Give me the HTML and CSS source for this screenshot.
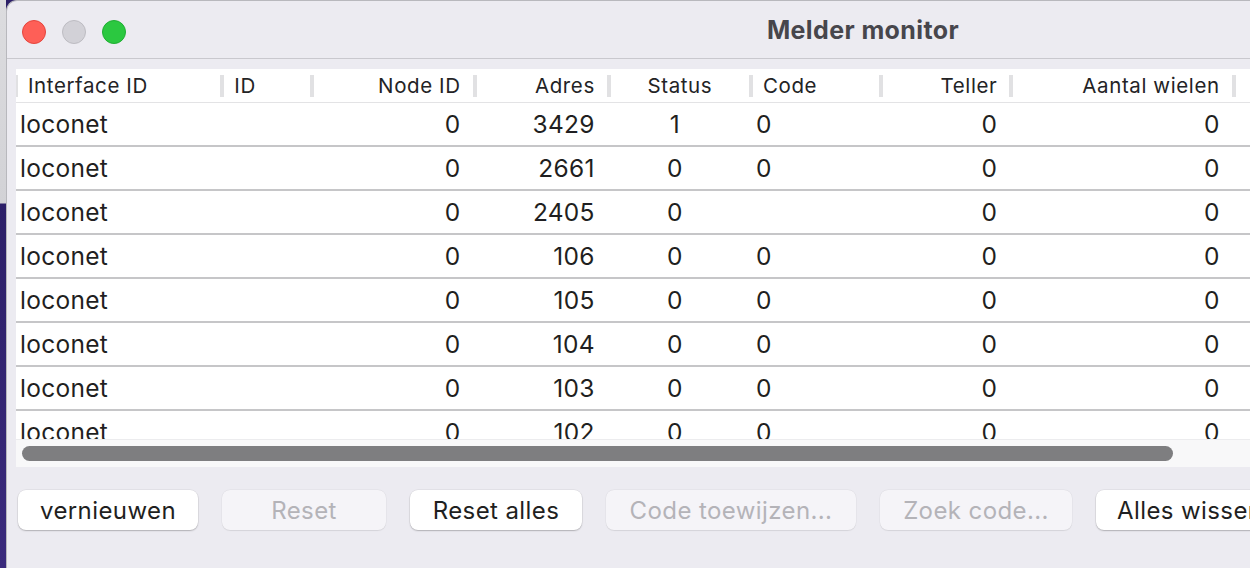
FILE: index.html
```html
<!DOCTYPE html>
<html>
<head>
    <title>Melder monitor</title>
    <link rel="stylesheet" href="styles.css">
</head>
<body>
    <div class="desktop-edge"></div>

    <div class="window">
        <!-- Titelbalk -->
        <div class="titlebar">
            <div class="lights">
                <span class="light close"></span>
                <span class="light minimize"></span>
                <span class="light zoom"></span>
            </div>
            <div class="title">Melder monitor</div>
            <div></div>
        </div>

        <div class="content">
            <!-- Tabel met melders -->
            <div class="table-box">
                <div class="table-clip">
                    <table class="melders">
                        <colgroup>
                            <col style="width: 206px">
                            <col style="width: 90px">
                            <col style="width: 162px">
                            <col style="width: 134px">
                            <col style="width: 142px">
                            <col style="width: 130px">
                            <col style="width: 130px">
                            <col style="width: 222px">
                            <col style="width: 200px">
                        </colgroup>
                        <thead>
                            <tr>
                                <th class="left">Interface ID</th>
                                <th class="left">ID</th>
                                <th class="right">Node ID</th>
                                <th class="right">Adres</th>
                                <th class="center">Status</th>
                                <th class="left">Code</th>
                                <th class="right">Teller</th>
                                <th class="right">Aantal wielen</th>
                                <th class="left"></th>
                            </tr>
                        </thead>
                        <tbody id="rows"></tbody>
                    </table>
                </div>
                <div class="hscroll"><div class="thumb"></div></div>
            </div>

            <!-- Knoppen -->
            <div class="buttons">
                <button class="btn w-vernieuwen">vernieuwen</button>
                <button class="btn w-reset" disabled>Reset</button>
                <button class="btn w-reset-alles">Reset alles</button>
                <button class="btn w-code" disabled>Code toewijzen...</button>
                <button class="btn w-zoek" disabled>Zoek code...</button>
                <button class="btn w-wissen">Alles wissen</button>
            </div>
        </div>
    </div>

    <script>
        // Meldergegevens
        const melders = [
            { iface: 'loconet', node: 0, adres: 3429, status: 1, code: '0', teller: 0, wielen: 0 },
            { iface: 'loconet', node: 0, adres: 2661, status: 0, code: '0', teller: 0, wielen: 0 },
            { iface: 'loconet', node: 0, adres: 2405, status: 0, code: '', teller: 0, wielen: 0 },
            { iface: 'loconet', node: 0, adres: 106, status: 0, code: '0', teller: 0, wielen: 0 },
            { iface: 'loconet', node: 0, adres: 105, status: 0, code: '0', teller: 0, wielen: 0 },
            { iface: 'loconet', node: 0, adres: 104, status: 0, code: '0', teller: 0, wielen: 0 },
            { iface: 'loconet', node: 0, adres: 103, status: 0, code: '0', teller: 0, wielen: 0 },
            { iface: 'loconet', node: 0, adres: 102, status: 0, code: '0', teller: 0, wielen: 0 }
        ];

        document.getElementById('rows').innerHTML = melders.map(m => `
            <tr>
                <td class="left">${m.iface}</td>
                <td class="left"></td>
                <td class="right">${m.node}</td>
                <td class="right">${m.adres}</td>
                <td class="center">${m.status}</td>
                <td class="left code">${m.code}</td>
                <td class="right">${m.teller}</td>
                <td class="right">${m.wielen}</td>
                <td></td>
            </tr>
        `).join('');
    </script>
</body>
</html>
```

FILE: styles.css
```css
:root {
    --window-bg: #ecebf1;
    --text: #1f1f21;
    --muted: #b4b3b8;
    --line: #c6c6c8;
}

html, body {
    margin: 0;
    height: 100%;
    overflow: hidden;
}

body {
    display: flex;
    font-family: 'Inter', 'Noto Sans', sans-serif;
    color: var(--text);
    background: #2c1f68;
}

.desktop-edge {
    width: 6px;
    flex: none;
    background: linear-gradient(to bottom, #dcdcdf 0, #d2d2d6 203px, #2c1f68 204px, #3a2a7c 100%);
}

.window {
    flex: none;
    width: 1712px;
    background: var(--window-bg);
    border-top-left-radius: 11px;
    border: 1px solid #b8b8bd;
    border-right: none;
    border-bottom: none;
}

.titlebar {
    height: 57px;
    display: grid;
    grid-template-columns: 1fr auto 1fr;
    align-items: center;
    border-bottom: 1px solid #c9c8ce;
}

.lights {
    display: flex;
    gap: 16px;
    padding-left: 15px;
    padding-top: 4px;
}

.light {
    width: 24px;
    height: 24px;
    border-radius: 50%;
    box-sizing: border-box;
}

.close { background: #fe5f57; border: 1px solid #e5443c; }
.minimize { background: #d2d1d7; border: 1px solid #bdbcc2; }
.zoom { background: #2bc840; border: 1px solid #1fae33; }

.title {
    font-weight: 700;
    font-size: 25px;
    letter-spacing: 0.4px;
    color: #47464c;
    padding-top: 1px;
}

.content {
    padding: 10px 0 0 9px;
}

.table-box {
    background: #fff;
}

.table-clip {
    height: 370px;
    overflow: hidden;
}

.melders {
    border-collapse: collapse;
    table-layout: fixed;
    width: 1418px;
}

.melders th {
    position: relative;
    height: 33px;
    padding: 0 14px 0 12px;
    font-weight: 400;
    font-size: 20.5px;
    letter-spacing: 0.6px;
    color: #232325;
    border-bottom: 1px solid #e3e3e5;
    white-space: nowrap;
}

.melders th::before {
    content: '';
    position: absolute;
    left: -2px;
    top: 6px;
    width: 4px;
    height: 22px;
    background: #e1e1e3;
}

.melders td {
    height: 42px;
    padding: 0 14px 0 4px;
    font-size: 24.5px;
    letter-spacing: 0.3px;
    border-bottom: 2px solid var(--line);
    white-space: nowrap;
}

.melders td.code {
    padding-left: 5px;
}

.left { text-align: left; }
.right { text-align: right; }
.center { text-align: center; }

.melders th.center {
    padding: 0 0 0 0;
}

.melders td.center {
    padding: 0 10px 0 0;
}

.hscroll {
    height: 27px;
    background: #f8f8f9;
    border-top: 1px solid #ececee;
    display: flex;
    align-items: center;
    padding-left: 6px;
}

.thumb {
    width: 1151px;
    height: 15px;
    border-radius: 8px;
    background: #7e7e80;
}

.buttons {
    display: flex;
    gap: 24px;
    margin-top: 23px;
    padding-left: 2px;
}

.btn {
    height: 40px;
    border: none;
    border-radius: 8px;
    background: #fff;
    font-family: inherit;
    font-size: 24px;
    letter-spacing: 0.4px;
    color: var(--text);
    box-shadow: 0 1px 1.5px rgba(0, 0, 0, 0.22), 0 0 0 0.5px rgba(0, 0, 0, 0.08);
    flex: none;
    padding: 0;
}

.btn:disabled {
    background: #f5f4f8;
    color: var(--muted);
    box-shadow: 0 0.5px 1px rgba(0, 0, 0, 0.08), 0 0 0 0.5px rgba(0, 0, 0, 0.04);
}

.w-vernieuwen { width: 180px; }
.w-reset { width: 164px; }
.w-reset-alles { width: 172px; }
.w-code { width: 250px; }
.w-zoek { width: 192px; }
.w-wissen { width: 190px; text-align: left; padding-left: 21px; }
```
